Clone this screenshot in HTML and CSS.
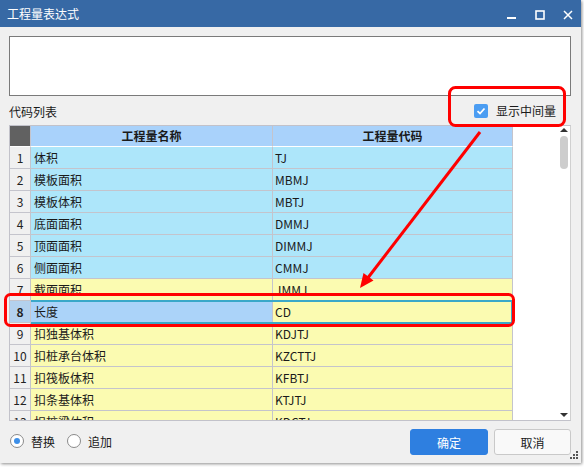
FILE: index.html
```html
<!DOCTYPE html>
<html>
<head>
<meta charset="utf-8">
<link rel="stylesheet" href="styles.css">
</head>
<body>
<div class="window">
  <div class="titlebar">
    <span class="title">工程量表达式</span>
    <div class="controls">
      <svg width="10" height="10" viewBox="0 0 10 10"><rect x="0" y="7" width="9" height="2" fill="#fff"/></svg>
      <svg width="10" height="10" viewBox="0 0 10 10"><rect x="1" y="1" width="8" height="8" fill="none" stroke="#fff" stroke-width="1.6"/></svg>
      <svg width="10" height="10" viewBox="0 0 10 10"><path d="M1 1 L9 9 M9 1 L1 9" stroke="#fff" stroke-width="1.5"/></svg>
    </div>
  </div>
  <div class="content">
    <div class="expr"></div>
    <div class="label-row">
      <span class="label">代码列表</span>
      <label class="check">
        <span class="box"><svg width="14" height="14" viewBox="0 0 14 14"><path d="M3.5 7.2 L6 9.5 L10.5 4.5" fill="none" stroke="#fff" stroke-width="1.8"/></svg></span>
        <span>显示中间量</span>
      </label>
    </div>
    <div class="grid">
      <div class="table">
        <div class="row head"><div class="num corner"></div><div class="name">工程量名称</div><div class="code">工程量代码</div></div>
        <div class="row cyan"><div class="num">1</div><div class="name">体积</div><div class="code">TJ</div></div>
        <div class="row cyan"><div class="num">2</div><div class="name">模板面积</div><div class="code">MBMJ</div></div>
        <div class="row cyan"><div class="num">3</div><div class="name">模板体积</div><div class="code">MBTJ</div></div>
        <div class="row cyan"><div class="num">4</div><div class="name">底面面积</div><div class="code">DMMJ</div></div>
        <div class="row cyan"><div class="num">5</div><div class="name">顶面面积</div><div class="code">DIMMJ</div></div>
        <div class="row cyan"><div class="num">6</div><div class="name">侧面面积</div><div class="code">CMMJ</div></div>
        <div class="row yellow"><div class="num">7</div><div class="name">截面面积</div><div class="code">JMMJ</div></div>
        <div class="row yellow sel"><div class="num">8</div><div class="name">长度</div><div class="code">CD</div></div>
        <div class="row yellow"><div class="num">9</div><div class="name">扣独基体积</div><div class="code">KDJTJ</div></div>
        <div class="row yellow"><div class="num">10</div><div class="name">扣桩承台体积</div><div class="code">KZCTTJ</div></div>
        <div class="row yellow"><div class="num">11</div><div class="name">扣筏板体积</div><div class="code">KFBTJ</div></div>
        <div class="row yellow"><div class="num">12</div><div class="name">扣条基体积</div><div class="code">KTJTJ</div></div>
        <div class="row yellow"><div class="num">13</div><div class="name">扣桩梁体积</div><div class="code">KDCTJ</div></div>
      </div>
      <div class="scrollarea">
        <div class="scrollbar">
          <span class="arrow up"></span>
          <span class="thumb"></span>
          <span class="spacer"></span>
          <span class="arrow down"></span>
        </div>
      </div>
    </div>
    <div class="footer">
      <div class="radios">
        <label class="radio"><span class="circle on"></span>替换</label>
        <label class="radio"><span class="circle"></span>追加</label>
      </div>
      <div class="buttons">
        <button class="btn primary">确定</button>
        <button class="btn">取消</button>
      </div>
    </div>
  </div>
  <div class="grip">
    <svg width="8" height="8" viewBox="0 0 8 8" fill="#555"><rect x="6" y="0" width="2" height="2"/><rect x="3" y="3" width="2" height="2"/><rect x="6" y="3" width="2" height="2"/><rect x="0" y="6" width="2" height="2"/><rect x="3" y="6" width="2" height="2"/><rect x="6" y="6" width="2" height="2"/></svg>
  </div>
</div>
<svg class="annot" width="584" height="467" viewBox="0 0 584 467">
  <rect x="449.5" y="87.5" width="115" height="38" rx="6" fill="none" stroke="#ff0000" stroke-width="3"/>
  <rect x="5.5" y="294.5" width="508" height="31" rx="5" fill="none" stroke="#ff0000" stroke-width="3"/>
  <line x1="480" y1="132" x2="367" y2="279" stroke="#ff0000" stroke-width="3"/>
  <polygon points="360,288 363.5,273 373.5,280.5" fill="#ff0000"/>
</svg>
</body>
</html>
```

FILE: styles.css
```css
* { box-sizing: border-box; }
html, body { margin: 0; padding: 0; }
body {
  width: 584px;
  height: 467px;
  background: #ffffff;
  font-family: "Noto Sans CJK SC", "Noto Sans", sans-serif;
  font-size: 12px;
  color: #1a1a1a;
  position: relative;
  overflow: hidden;
}
.window {
  width: 581px;
  height: 463px;
  background: #f0f0f0;
  box-shadow: 1px 1px 3px rgba(0,0,0,0.45);
  position: relative;
  display: flex;
  flex-direction: column;
}
.titlebar {
  height: 27px;
  background: #3769a5;
  color: #fff;
  display: flex;
  align-items: center;
  justify-content: space-between;
  padding: 0 8px 0 7px;
  flex: none;
}
.title { font-size: 12px; line-height: 14px; padding-top: 1px; }
.controls { display: flex; gap: 18px; align-items: center; padding-top: 2px; }
.controls svg { display: block; }
.content {
  padding: 9px 10px 0 9px;
  display: flex;
  flex-direction: column;
  flex: 1;
}
.expr {
  height: 60px;
  width: 562px;
  background: #fff;
  border: 1px solid #7a7a7a;
}
.label-row {
  height: 29px;
  display: flex;
  align-items: center;
  justify-content: space-between;
  padding-right: 15px;
}
.label { padding-top: 1px; }
.check { display: flex; align-items: center; gap: 8px; font-size: 12px; }
.box {
  width: 14px; height: 14px;
  background: #4b9df2;
  border-radius: 2px;
  display: block;
}
.box svg { display: block; }
.grid {
  width: 562px;
  height: 296px;
  border: 1px solid #c2c2ca;
  border-right-color: #d0d0d0;
  display: flex;
  overflow: hidden;
  background: #fff;
}
.table { width: 503px; flex: none; }
.row { display: flex; height: 22px; }
.row > div {
  height: 22px;
  border-right: 1px solid #c4c4cc;
  border-bottom: 1px solid #c4c4cc;
  line-height: 21px;
  white-space: nowrap;
  overflow: hidden;
}
.num { width: 21px; text-align: center; background: #f0f0f0; color: #222; }
.name { width: 242px; padding-left: 3px; }
.code { width: 240px; padding-left: 2px; }
.row.head { height: 21px; }
.row.head > div { height: 21px; line-height: 20px; border-bottom: 1px solid #ffffff; font-weight: bold; text-align: center; background: #a9d2fb; padding: 0; }
.row.head > .corner { background: #616161; border-bottom-color: #fff; }
.cyan .name, .cyan .code { background: #ade6fa; }
.yellow .name, .yellow .code { background: #fbfbb1; }
.row.sel { position: relative; }
.row.sel .num { background: #b3d1ee; font-weight: bold; }
.row.sel .name { background: #abd3f9; }
.row.sel::after {
  content: "";
  position: absolute;
  left: 21px;
  right: 0;
  top: -1px;
  bottom: -1px;
  border: 2px solid #3aa8c9;
  border-left: none;
  pointer-events: none;
}
.scrollarea { flex: 1; background: #fff; display: flex; justify-content: flex-end; padding-right: 2px; }
.scrollbar { width: 8px; display: flex; flex-direction: column; align-items: center; padding-top: 2px; padding-bottom: 3px; }
.arrow { width: 0; height: 0; border-left: 4px solid transparent; border-right: 4px solid transparent; display: block; flex: none; }
.arrow.up { border-bottom: 4px solid #333; }
.arrow.down { border-top: 4px solid #333; }
.thumb { width: 8px; height: 33px; background: #cdcdcd; border-radius: 4px; margin-top: 4px; flex: none; }
.spacer { flex: 1; }
.footer {
  height: 42px;
  display: flex;
  align-items: center;
  justify-content: space-between;
  width: 562px;
  padding-left: 1px;
  padding-bottom: 2px;
}
.radios { display: flex; gap: 12px; align-items: center; }
.radio { display: flex; align-items: center; gap: 7px; }
.circle {
  width: 14px; height: 14px; border-radius: 50%;
  border: 1px solid #8a8a8a; background: #fff;
  display: flex; align-items: center; justify-content: center;
}
.circle.on::after { content: ""; width: 6px; height: 6px; border-radius: 50%; background: #3d8fe8; }
.buttons { display: flex; gap: 6px; padding-top: 2px; }
.btn {
  width: 77px; height: 26px;
  font-family: "Noto Sans CJK SC", "Noto Sans", sans-serif;
  font-size: 12px;
  border-radius: 3px;
  border: 1px solid #c9c9c9;
  background: #f9f9f9;
  color: #1a1a1a;
  padding: 0;
}
.btn.primary { width: 78px; background: #2e7fe0; border-color: #2e7fe0; color: #fff; }
.grip { position: absolute; right: 3px; bottom: 4px; line-height: 0; }
.annot { position: absolute; left: 0; top: 0; pointer-events: none; }
```
